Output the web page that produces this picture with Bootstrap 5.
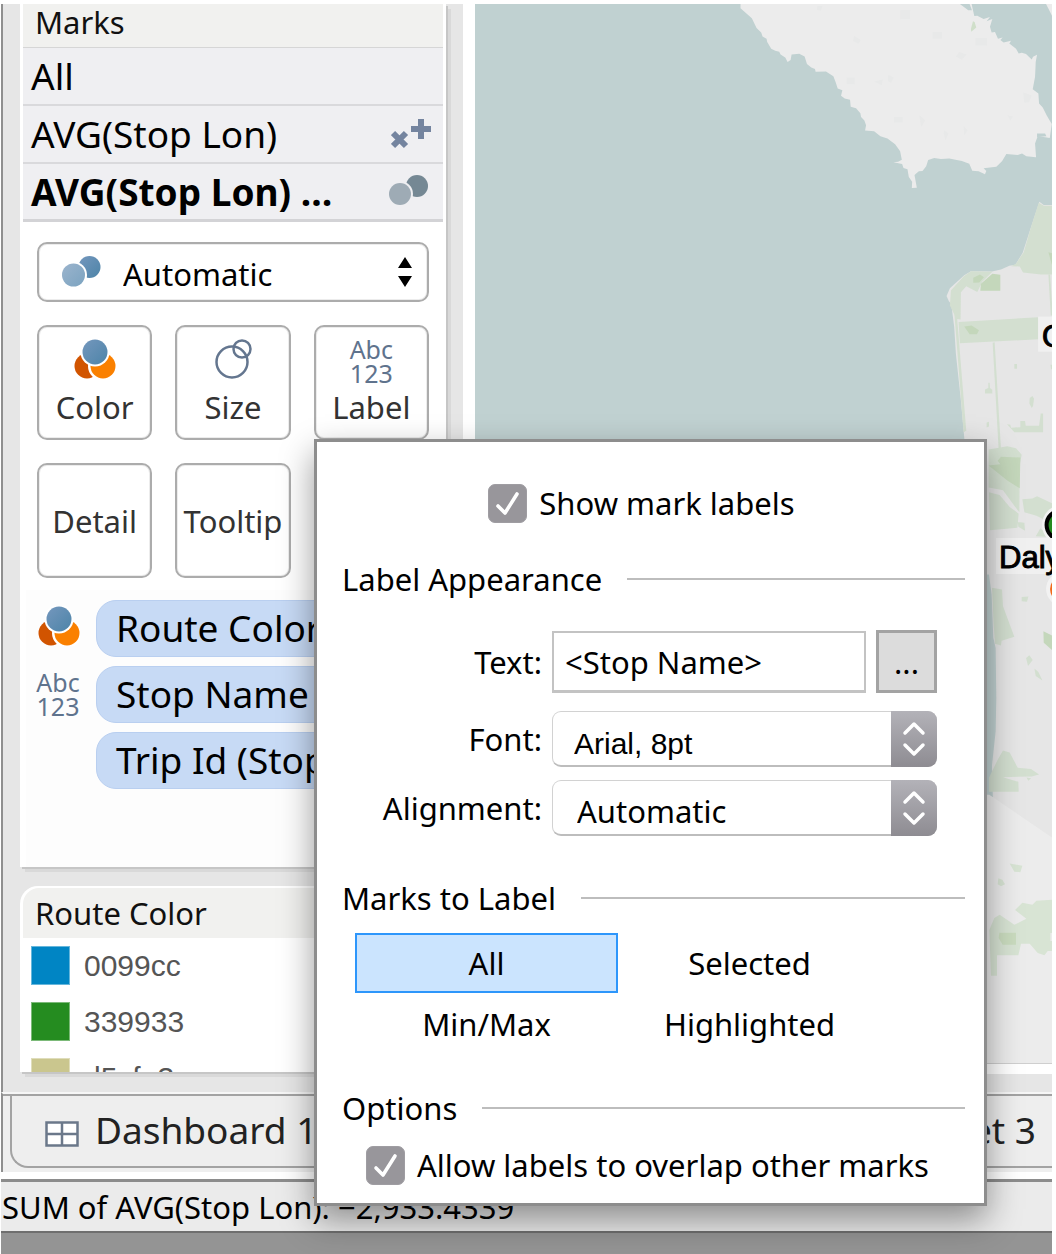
<!DOCTYPE html>
<html lang="en">
<head>
<meta charset="utf-8">
<meta name="viewport" content="width=device-width, initial-scale=1">
<title>Marks card</title>
<link href="https://cdn.jsdelivr.net/npm/bootstrap@5.3.0/dist/css/bootstrap.min.css" rel="stylesheet">
<style>
body{font-family:"Noto Sans","Open Sans",sans-serif;font-size:31px;line-height:40px;color:#000;background:#fff;overflow-x:hidden}
button,input,select{font-family:inherit;font-size:inherit;font-weight:inherit;color:inherit}
.app{position:relative;padding:4px 4px 0 1px;min-height:100vh;display:flex;flex-direction:column}
.workspace{border-left:2px solid #8f8f8f;background:#e6e6e6}
.side{width:460px;flex:none;padding:0 17px 20px 17px}
.pane{background:#fff;border:solid #fff;border-width:0 3px 0 3px;box-shadow:2px 2px 0 #c6c6c6,5px 5px 0 #d9d9d9}
.marks-pane{margin-bottom:19px}
.route-pane{border-top-width:2px;border-radius:18px 18px 0 0}
.pane-title{background:#f1f1ef;font-size:31px;font-weight:400;color:#111;padding-left:12px}
.title-marks{height:44px;line-height:36px;border-bottom:1px solid #d6d6d6}
.title-route{height:50px;line-height:50px;border-radius:16px 16px 0 0}
.layer{font-size:37px;height:58px;background:#efeff2;border-bottom:2px solid #d9d9dc;padding:0 12px 0 8px}
.layer:last-child{font-weight:700;border-bottom-width:3px;border-color:#d3d3d6}
.shelf{padding:20px 14px 12px}
.soft{border:2px solid #acacac;border-radius:10px;background:#fff;box-shadow:inset 0 0 0 1px #ececec}
.mark-type{position:relative;height:60px;margin-bottom:23px}
.mark-type select{appearance:none;border:0;background:none;width:100%;height:100%;padding:4px 50px 0 84px;outline:0}
.mark-type svg{position:absolute;pointer-events:none}
.dots{left:23px;top:11px}
.updown{right:14px;top:13px}
.tiles{display:grid;grid-template-columns:repeat(3,1fr);gap:23px}
.tile{height:115px;padding:0;color:#333;display:flex;flex-direction:column;align-items:center;justify-content:center;line-height:44px;white-space:nowrap}
.abc{font-size:25px;line-height:24px;height:48px;color:#5f738d;text-align:center}
.glyph{height:48px;display:block}
.pills{background:#fdfdfd;margin-left:3px;padding:10px 0 69px 8px}
.pill-row{height:56px;margin-bottom:10px}
.pill-icon{width:48px;flex:none;margin-right:14px}
.pill{background:#c7daf5;border:1px solid #b9cff0;border-radius:20px;height:57px;line-height:54px;font-size:37px;padding-left:19px;width:331px;white-space:nowrap;overflow:hidden}
.legend{height:134px;overflow:hidden;font-family:"Liberation Sans",Arial,sans-serif;font-size:30px;color:#555;padding:8px 0 0 8px}
.legend li{height:39px;margin-bottom:17px}
.swatch{width:39px;height:39px;margin-right:14px;border:1px solid #ffffff66}
.map-frame{border-left:12px solid #fff;border-bottom:10px solid #fff;margin-bottom:18px;position:relative;overflow:hidden;background:#c0d1d1}
.map-frame svg{position:absolute;width:100%;height:100%;left:0;top:0}
.tabs{border-left:2px solid #8f8f8f;border-top:2px solid #f6f6f6;background:#efefef;height:80px}
.tab-strip{border-top:2px solid #a3a3a3;height:74px;padding-left:7px}
.tab-btn{border:2px solid #a3a3a3;border-top:0;border-right:0;background:#eee;height:72px;font-size:37px;color:#222;padding:0 20px 2px 33px}
.first-tab{border-bottom-left-radius:18px;flex:1;text-align:left}
.last-tab{border-left:0;padding-right:16px}
.status{border-top:3px solid #8c8c8c;border-bottom:2px solid #6f6f6f;margin-top:7px;background:#ebebeb;height:54px;line-height:50px;font-size:31px;padding-left:1px;white-space:nowrap}
.desk{min-height:22px;flex:1;background:#949494}
.label-pop{position:absolute;left:314px;top:439px;width:673px;background:#fff;border:3px solid #8d8d8d;padding:41px 19px 18px 25px;box-shadow:0 14px 32px rgba(0,0,0,.4)}
.tick{appearance:none;width:39px;height:39px;border-radius:7px;border:1px solid #9f9da2;margin:0;flex:none;background:#98969b url("data:image/svg+xml,%3Csvg xmlns='http://www.w3.org/2000/svg' viewBox='0 0 37 37'%3E%3Cpath d='M9 21l7 7L28 9' fill='none' stroke='%23fff' stroke-width='3.6' stroke-linecap='round' stroke-linejoin='round'/%3E%3C/svg%3E") center/100%}
.tick-show{margin-right:24px}
.rule{height:2px;background:#bdbdbd;flex:1;margin-left:25px}
.sec{height:40px}
.sec-look{margin:36px 0 31px}
.sec-marks{margin:42px 0 15px}
.sec-opts{margin:34px 0 17px}
.field{gap:10px;padding-right:28px}
.field-font{margin-top:18px}
.field-align{margin-top:13px}
.field-name{width:200px;text-align:right;flex:none}
.text-in{height:62px;border:2px solid #c3c3c3;border-bottom-width:3px;flex:1;min-width:0;padding:2px 11px 0;outline:0}
.more{width:61px;height:63px;border:3px solid #a3a3a3;background:#dcdcdc;padding:0;flex:none}
.mac{position:relative;height:56px;flex:1}
.mac select{appearance:none;width:100%;height:100%;border:1px solid #d2d2d2;border-bottom:2px solid #bdbdbd;border-radius:9px;background:#fff;padding:6px 50px 0 24px;outline:0}
.mac .arial{font-family:"Liberation Sans",Arial,sans-serif;font-size:30px;padding-top:10px;padding-left:21px}
.cap-end{position:absolute;right:0;top:0;width:46px;height:56px;border-radius:0 9px 9px 0;background:linear-gradient(#b3b2b8,#8e8c92);pointer-events:none}
.cap-end svg{display:block}
.choices{display:grid;grid-template-columns:1fr 1fr;row-gap:1px;padding:0 84px 0 13px}
.choice{height:60px;border:2px solid transparent;background:none;padding:0}
.choice.active{border-color:#2d96fb;background:#cbe4fe}
</style>
<script src="https://cdn.jsdelivr.net/npm/bootstrap@5.3.0/dist/js/bootstrap.bundle.min.js"></script>
</head>
<body>
<svg width="0" height="0" class="position-absolute" aria-hidden="true">
  <defs>
    <linearGradient id="steel" x2="1" y2="1"><stop stop-color="#7497bd"/><stop offset="1" stop-color="#4d84a8"/></linearGradient>
    <linearGradient id="pale" x2="1" y2="1"><stop stop-color="#9bb4cd"/><stop offset="1" stop-color="#7ba3c0"/></linearGradient>
    <symbol id="tri" viewBox="0 0 42 40">
      <circle cx="13" cy="27" r="12.5" fill="#d15400"/>
      <circle cx="29" cy="27" r="15" fill="#fff"/><circle cx="29" cy="27" r="12.5" fill="#fa8000"/>
      <circle cx="21" cy="13" r="14.500" fill="#fff"/><circle cx="21" cy="13" r="12.500" fill="url(#steel)"/>
    </symbol>
  </defs>
</svg>
<div class="app">
  <main class="workspace d-flex">
    <aside class="side">
      <section class="pane marks-pane">
        <h2 class="pane-title title-marks m-0">Marks</h2>
        <div>
          <div class="layer d-flex align-items-center">All</div>
          <div class="layer d-flex align-items-center justify-content-between">AVG(Stop Lon)
            <svg width="40" height="32" viewBox="0 0 40 32" stroke="#74849f" stroke-width="6" fill="none"><path d="M20 11h20M30 1v20M2 15l13 13M15 15L2 28"/></svg>
          </div>
          <div class="layer d-flex align-items-center justify-content-between"><span>AVG(Stop Lon) …</span>
            <svg width="42" height="40" viewBox="0 0 42 40"><circle cx="28" cy="14" r="11" fill="#758894"/><circle cx="11" cy="22" r="13" fill="#efeff2"/><circle cx="11" cy="22" r="11" fill="#9eabb5"/></svg>
          </div>
        </div>
        <div class="shelf">
          <div class="mark-type soft">
            <svg class="dots" width="39" height="34" viewBox="0 0 39 34"><circle cx="27.500" cy="12" r="11" fill="url(#steel)"/><circle cx="11.500" cy="20" r="13.500" fill="#fff"/><circle cx="11.500" cy="20" r="11.500" fill="url(#pale)"/></svg>
            <select aria-label="Mark type"><option>Automatic</option></select>
            <svg class="updown" width="16" height="30" viewBox="0 0 16 30"><path d="M1 11L8 0l7 11zM1 19h14L8 30z"/></svg>
          </div>
          <div class="tiles">
            <button class="tile soft"><svg class="glyph" width="42" viewBox="0 0 42 48"><use href="#tri" y="2" width="42" height="40"/></svg>Color</button>
            <button class="tile soft"><svg class="glyph" width="38" viewBox="0 0 38 48" fill="none" stroke="#64768f" stroke-width="2.500"><circle cx="18" cy="25" r="15.500"/><circle cx="28" cy="12" r="8.500"/></svg>Size</button>
            <button class="tile soft"><span class="abc">Abc<br>123</span>Label</button>
            <button class="tile soft">Detail</button>
            <button class="tile soft">Tooltip</button>
          </div>
        </div>
        <div class="pills">
          <div class="pill-row d-flex align-items-center"><span class="pill-icon ps-1"><svg class="d-block mb-1" width="42" height="40"><use href="#tri" width="42" height="40"/></svg></span><span class="pill">Route Color</span></div>
          <div class="pill-row d-flex align-items-center"><span class="pill-icon abc">Abc<br>123</span><span class="pill">Stop Name</span></div>
          <div class="pill-row d-flex align-items-center"><span class="pill-icon"></span><span class="pill">Trip Id (Stop Id)</span></div>
        </div>
      </section>
      <section class="pane route-pane">
        <h2 class="pane-title title-route m-0">Route Color</h2>
        <ul class="legend list-unstyled m-0">
          <li class="d-flex align-items-center"><span class="swatch" style="background:#0085c4"></span>0099cc</li>
          <li class="d-flex align-items-center"><span class="swatch" style="background:#258c20"></span>339933</li>
          <li class="d-flex align-items-center"><span class="swatch" style="background:#cac68e"></span>d5cfa3</li>
        </ul>
      </section>
    </aside>
    <div class="map-frame flex-grow-1">
      <svg viewBox="475 4 577 1058" preserveAspectRatio="xMinYMin slice" font-family="Liberation Sans, Arial, sans-serif" font-size="31">
        <rect x="475" y="4" width="2000" height="1070" fill="#c0d1d1"/>
        <g transform="translate(740 0) scale(.333333)">
          <path fill="#ececec" d="M0 12L0 25 34 55 48 84 62 97 66 109 78 116 80 126 92 146 104 152 116 155 120 163 134 172 141 186 150 180 153 163 176 161 192 169 199 192 212 202 223 207 225 215 256 214 278 228 285 246 291 265 305 270 301 287 312 295 328 299 330 320 346 324 359 339 361 350 371 361 376 375 373 391 400 393 419 408 440 415 463 432 478 453 483 478 472 484 458 486 484 491 488 503 500 507 504 530 514 544 513 563 528 562 521 524 534 513 545 512 556 498 562 479 580 473 600 476 625 475 663 482 685 490 694 511 713 513 732 522 736 512 728 504 766 499 783 483 796 461 830 464 843 460 856 468 885 471 882 430 890 407 926 413 932 371 917 346 905 322 894 310 892 280 875 267 882 230 884 186 888 164 876 170 872 178 855 162 842 158 833 160 825 146 805 130 810 122 788 127 778 120 785 112 771 116 762 96 752 97 747 80 754 57 737 64 747 51 728 57 709 47 700 48 692 12z"/>
          <path fill="#c0d1d1" d="M657 12L682 31 693 31 686 12zM888 400h24l4 8-28 2z"/>
          <path fill="#ececec" d="M915 12h40v60L932 46z"/>
          <path fill="#d0dfca" d="M696 64l5 2 5 16-15 13-1-8z"/>
          <g fill="#e8e9e9"><path d="M230 18h15l-4 14-12-3zM340 108l20 12-7 11-16-8zM442 224l17 8-8 16-9-5zM400 244l26-6-3 17zM655 156l22 7-14 16-18-10zM318 232h24v20h-24zM846 276l26 10-8 20-14 2zM800 346l16 3-8 12zM610 390l13 10-9 20-6-20zM535 344l18 16-12 20zM460 350h26v17h-26zM668 378l12 13-10 14zM478 30h30v28h-30zM575 96h28v20h-28zM704 114h34v22h-34z"/></g>
        </g>
        <g transform="translate(900 180) scale(.333333)">
          <path fill="#e6e6e6" d="M415 64L428 74 2000 80V2800H340C290 2300 268 1900 266 1230L206 860 191 782 180 660 165 520 160 440 151 370 144 362 137 346 147 323 190 284 210 272 273 273 300 267 325 256 343 253 365 217 390 140z"/>
          <g fill="#d3dfd0">
            <path d="M413 67L428 76H2000V280L420 282 366 276 356 258 330 257 345 250 368 215 390 140z"/>
            <path d="M150 330l38-42 22-16 64 2-30 30-15 30-33-17-16 18-1 82-12-2-20-40z"/>
            <path d="M173 424L412 410V476L177 488zM159 380l7 0 30 370-8 4zM275 486l6-1 19 320-7 1zM442 282l5 0 8 122-6 1zM262 606l4 0 1 16 7 5v11h-22v-12l10-4zM318 730l10 2 2 9 28-2v-18h14l2 14h40l5-37h7v56h-86zM386 652l8-6 5 8-3 22-4 6-7-14zM340 550h8v14h-8zM448 552h20v14h-18zM257 725l7-2v14l-7 3z"/>
            <path d="M263 806l56-10 26 6 17 20-6 30-1 142-14-18-35-48-43-8z"/>
            <path d="M264 934l32 8 30 36 27 20-4 42-82 8zM364 955l30-2 14-7 60 28v40h-42l-20-10-36-10zM350 1023l20 2 2 24-20-12zM404 1066l14-24 30 26zM273 1220l30 5 3 50 34 92-38 12-2 14-18-5-4-58zM362 1248l20-2-4 16-16-2z"/>
          </g>
          <g fill="#c4d7bb"><path d="M240 310l34-30 24 3v48l-60 0zM217 292l20-10 12 8-14 16-18 1zM190 438l22-3 22 14-6 12-22 0zM442 215l30 10v32l-20-5zM300 828l58 2-2 92-35-22-58-46 35-4-8-10zM427 1350l41 20v50l-40-35z"/></g>
        </g>
        <g transform="translate(660 430) scale(.333333)">
          <path fill="#c0d1d1" d="M900 430h84l8 60 5 130 7 30 2 150-2 100-14 130-5 120h-85z"/>
          <path fill="#ececec" d="M900 1090h85l191 130H2600v800H960z"/>
          <path fill="#d3dfd0" d="M1010 985l16-28 20 6 24 46 40 4 24 16-22 6-86 2 46 14 1 30h-89v-42zM1095 680l10-8 10 14-14 18zM1120 712l12 10 12 26-20-14zM1096 1038l14 2-8 8z"/>
        </g>
        <g transform="translate(660 850) scale(.333333)" fill="#d8e4d4">
          <path d="M1046 36l38 6-6 20-18-2zM1012 80l12 4 8 14-12 6-10-6zM985 235l15-36 16-10 44 30 36-18-34-26 22-22 30 6 12-12 80-5v102h-38v24h38v30h-46l-10 12-20-6-24-28-26 0-8 34h-64v62h-18z"/>
          <path d="M1015 243h50v36h-40l-12-20z" fill="#cadcbf"/>
        </g>
        <rect x="475" y="1061" width="2000" height="3" fill="#cfcfcf"/>
        <rect x="1037" y="316" width="120" height="35" fill="#f0f0f0"/><text x="1041" y="346" stroke="#000" stroke-width="1">Ocean</text>
        <circle cx="1061" cy="524" r="20" fill="#f2f2f2"/><circle cx="1060" cy="524" r="14.500" fill="#258c20" stroke="#000" stroke-width="4"/>
        <rect x="995" y="537" width="160" height="36" fill="#f0f0f0"/><text x="998" y="567" stroke="#000" stroke-width="1">Daly City</text>
        <circle cx="1062" cy="588" r="17" fill="#f2f2f2"/><circle cx="1062" cy="588" r="13" fill="#f26a1b"/>
      </svg>
    </div>
  </main>
  <nav class="tabs" aria-label="Sheets">
    <div class="tab-strip d-flex">
      <button class="tab-btn first-tab"><svg width="34" height="26" viewBox="0 0 34 26" class="me-3" fill="#fff" stroke="#6b788a" stroke-width="2.500"><path d="M1.500 1.500h31v23h-31zM17 1.500v23M1.500 13h31"/></svg>Dashboard 1</button>
      <button class="tab-btn last-tab">Sheet 3</button>
    </div>
  </nav>
  <footer class="status">SUM of AVG(Stop Lon): −2,933.4339</footer>
  <div class="desk"></div>

  <form class="label-pop" onsubmit="return false">
    <div class="d-flex justify-content-center align-items-center tick-show"><input class="tick" type="checkbox" id="showLabels" checked><label for="showLabels" class="ms-2 ps-1">Show mark labels</label></div>
    <div class="sec sec-look d-flex align-items-center">Label Appearance<span class="rule"></span></div>
    <div class="field d-flex align-items-center">
      <label class="field-name" for="labelText">Text:</label>
      <input class="text-in" id="labelText" type="text" value="&lt;Stop Name&gt;">
      <button class="more" type="button" aria-label="Edit text">...</button>
    </div>
    <div class="field field-font d-flex align-items-center">
      <label class="field-name" for="labelFont">Font:</label>
      <div class="mac"><select id="labelFont" class="arial"><option>Arial, 8pt</option></select><span class="cap-end"><svg width="46" height="56" viewBox="0 0 46 56" fill="none" stroke="#fff" stroke-width="3.500" stroke-linecap="round" stroke-linejoin="round"><path d="M14 22l9-9 9 9M14 34l9 9 9-9"/></svg></span></div>
    </div>
    <div class="field field-align d-flex align-items-center">
      <label class="field-name" for="labelAlign">Alignment:</label>
      <div class="mac"><select id="labelAlign"><option>Automatic</option></select><span class="cap-end"><svg width="46" height="56" viewBox="0 0 46 56" fill="none" stroke="#fff" stroke-width="3.500" stroke-linecap="round" stroke-linejoin="round"><path d="M14 22l9-9 9 9M14 34l9 9 9-9"/></svg></span></div>
    </div>
    <div class="sec sec-marks d-flex align-items-center">Marks to Label<span class="rule"></span></div>
    <div class="choices">
      <button type="button" class="choice active">All</button>
      <button type="button" class="choice">Selected</button>
      <button type="button" class="choice">Min/Max</button>
      <button type="button" class="choice">Highlighted</button>
    </div>
    <div class="sec sec-opts d-flex align-items-center">Options<span class="rule"></span></div>
    <div class="d-flex align-items-center ps-4"><input class="tick" type="checkbox" id="overlap" checked><label for="overlap" class="ms-2 ps-1">Allow labels to overlap other marks</label></div>
  </form>
</div>
</body>
</html>
